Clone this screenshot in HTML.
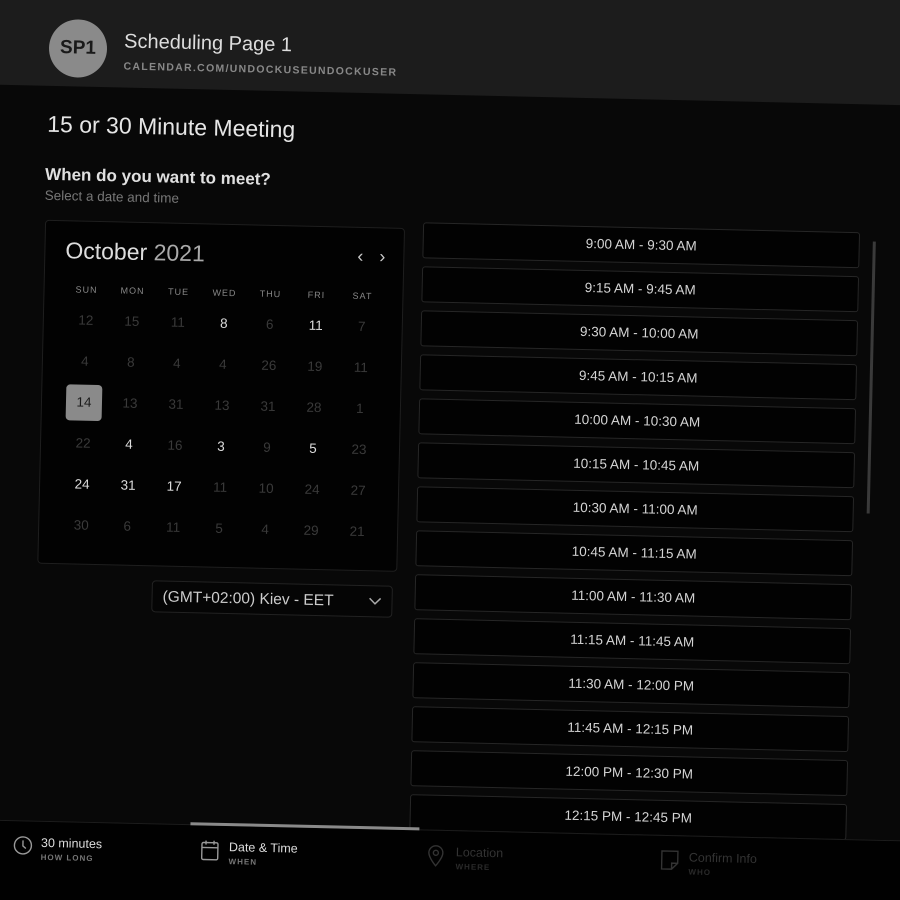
<!DOCTYPE html>
<html><head><meta charset="utf-8"><style>
html,body{margin:0;padding:0;width:900px;height:900px;overflow:hidden;background:#080808;}
#clip{position:relative;width:900px;height:900px;overflow:hidden;}
#w{position:absolute;left:-60px;top:-60px;width:1020px;height:1020px;transform-origin:510px 510px;transform:rotate(1.3deg);background:#080808;font-family:"Liberation Sans",sans-serif;color:#ddd;}
#p{position:absolute;left:60px;top:60px;width:900px;height:900px;}
.hdr{position:absolute;left:-60px;top:-60px;width:1020px;height:155px;background:#1c1c1c;}
.av{position:absolute;left:40px;top:28px;width:58px;height:58px;border-radius:50%;background:#8a8a8a;color:#1a1a1a;font-size:19px;font-weight:bold;text-align:center;line-height:58px;}
.t1{position:absolute;left:115px;top:38px;font-size:20px;color:#ddd;}
.t2{position:absolute;left:115px;top:68px;font-size:10.5px;letter-spacing:1.3px;font-weight:bold;color:#888;}
.h1{position:absolute;left:40px;top:120px;font-size:23px;color:#e6e6e6;}
.h2{position:absolute;left:39px;top:174px;font-size:17px;font-weight:bold;color:#e0e0e0;}
.h3{position:absolute;left:39px;top:197px;font-size:13.5px;color:#777;}
.cal{position:absolute;left:40px;top:229px;width:358px;height:342px;border:1px solid #1e1e1e;border-radius:4px;background:#020202;}
.mon{position:absolute;left:20px;top:16px;font-size:23px;color:#ddd;}
.mon span{color:#aaa;}
.nav{position:absolute;top:18px;font-size:18px;color:#ccc;}
.dh{position:absolute;top:63px;width:40px;text-align:center;font-size:9px;letter-spacing:1px;color:#888;margin-left:-20px;}
.d{position:absolute;width:36px;height:36px;line-height:36px;text-align:center;font-size:13.5px;color:#3a3a3a;margin-left:-18px;}
.d.b{color:#ddd;}
.d.s{background:#8a8a8a;color:#1a1a1a;border-radius:4px;}
.tz{position:absolute;left:155px;top:587px;width:241px;height:32px;border:1px solid #222;border-radius:4px;background:#050505;font-size:15.5px;color:#ccc;line-height:32px;padding-left:10px;box-sizing:border-box;}
.tz svg{position:absolute;right:10px;top:11px;}
.slot{position:absolute;left:418px;width:437px;height:36px;border:1px solid #262626;border-radius:3px;background:#020202;box-sizing:border-box;text-align:center;line-height:34px;font-size:13.5px;color:#d4d4d4;}
.sb{position:absolute;left:868px;top:232px;width:3px;height:272px;background:#3a3a3a;}
.ft{position:absolute;left:-60px;top:830px;width:1020px;height:200px;background:#010101;border-top:1px solid #1c1c1c;}
.bar{position:absolute;left:199px;top:828px;width:229px;height:3px;background:#8a8a8a;}
.fi{position:absolute;top:845px;}
.fi .a{font-size:12.5px;color:#ddd;}
.fi .b{font-size:8px;letter-spacing:1px;font-weight:bold;color:#777;margin-top:3px;}
.fi.g .a{color:#333}.fi.g .b{color:#2a2a2a}
.fi svg{position:absolute;left:-28px;top:0;}
</style></head><body><div id="clip"><div id="w"><div id="p">
<div class="hdr"></div>
<div class="av">SP1</div>
<div class="t1">Scheduling Page 1</div>
<div class="t2">CALENDAR.COM/UNDOCKUSEUNDOCKUSER</div>
<div class="h1">15 or 30 Minute Meeting</div>
<div class="h2">When do you want to meet?</div>
<div class="h3">Select a date and time</div>
<div class="cal">
<div class="mon">October <span>2021</span></div>
<div class="nav" style="left:312px">&#8249;</div><div class="nav" style="left:334px">&#8250;</div>
<div class="dh" style="left:42px">SUN</div><div class="dh" style="left:88px">MON</div><div class="dh" style="left:134px">TUE</div><div class="dh" style="left:180px">WED</div><div class="dh" style="left:226px">THU</div><div class="dh" style="left:272px">FRI</div><div class="dh" style="left:318px">SAT</div>
<div class="d" style="left:42px;top:81px">12</div><div class="d" style="left:88px;top:81px">15</div><div class="d" style="left:134px;top:81px">11</div><div class="d b" style="left:180px;top:81px">8</div><div class="d" style="left:226px;top:81px">6</div><div class="d b" style="left:272px;top:81px">11</div><div class="d" style="left:318px;top:81px">7</div>
<div class="d" style="left:42px;top:122px">4</div><div class="d" style="left:88px;top:122px">8</div><div class="d" style="left:134px;top:122px">4</div><div class="d" style="left:180px;top:122px">4</div><div class="d" style="left:226px;top:122px">26</div><div class="d" style="left:272px;top:122px">19</div><div class="d" style="left:318px;top:122px">11</div>
<div class="d s" style="left:42px;top:163px">14</div><div class="d" style="left:88px;top:163px">13</div><div class="d" style="left:134px;top:163px">31</div><div class="d" style="left:180px;top:163px">13</div><div class="d" style="left:226px;top:163px">31</div><div class="d" style="left:272px;top:163px">28</div><div class="d" style="left:318px;top:163px">1</div>
<div class="d" style="left:42px;top:204px">22</div><div class="d b" style="left:88px;top:204px">4</div><div class="d" style="left:134px;top:204px">16</div><div class="d b" style="left:180px;top:204px">3</div><div class="d" style="left:226px;top:204px">9</div><div class="d b" style="left:272px;top:204px">5</div><div class="d" style="left:318px;top:204px">23</div>
<div class="d b" style="left:42px;top:245px">24</div><div class="d b" style="left:88px;top:245px">31</div><div class="d b" style="left:134px;top:245px">17</div><div class="d" style="left:180px;top:245px">11</div><div class="d" style="left:226px;top:245px">10</div><div class="d" style="left:272px;top:245px">24</div><div class="d" style="left:318px;top:245px">27</div>
<div class="d" style="left:42px;top:286px">30</div><div class="d" style="left:88px;top:286px">6</div><div class="d" style="left:134px;top:286px">11</div><div class="d" style="left:180px;top:286px">5</div><div class="d" style="left:226px;top:286px">4</div><div class="d" style="left:272px;top:286px">29</div><div class="d" style="left:318px;top:286px">21</div>
</div>
<div class="tz">(GMT+02:00) Kiev - EET<svg width="13" height="8" viewBox="0 0 13 8"><path d="M1 1l5.5 5.5L12 1" stroke="#aaa" stroke-width="1.5" fill="none"/></svg></div>
<div class="slot" style="top:223px">9:00 AM - 9:30 AM</div>
<div class="slot" style="top:267px">9:15 AM - 9:45 AM</div>
<div class="slot" style="top:311px">9:30 AM - 10:00 AM</div>
<div class="slot" style="top:355px">9:45 AM - 10:15 AM</div>
<div class="slot" style="top:399px">10:00 AM - 10:30 AM</div>
<div class="slot" style="top:443px">10:15 AM - 10:45 AM</div>
<div class="slot" style="top:487px">10:30 AM - 11:00 AM</div>
<div class="slot" style="top:531px">10:45 AM - 11:15 AM</div>
<div class="slot" style="top:575px">11:00 AM - 11:30 AM</div>
<div class="slot" style="top:619px">11:15 AM - 11:45 AM</div>
<div class="slot" style="top:663px">11:30 AM - 12:00 PM</div>
<div class="slot" style="top:707px">11:45 AM - 12:15 PM</div>
<div class="slot" style="top:751px">12:00 PM - 12:30 PM</div>
<div class="slot" style="top:795px">12:15 PM - 12:45 PM</div>
<div class="sb"></div>
<div class="ft"></div>
<div class="bar"></div>
<div class="fi" style="left:50px"><svg width="20" height="20" viewBox="0 0 20 20"><circle cx="10" cy="10" r="8.5" stroke="#999" stroke-width="1.4" fill="none"/><path d="M10 5v5.5l3 2.5" stroke="#999" stroke-width="1.4" fill="none"/></svg><div class="a">30 minutes</div><div class="b">HOW LONG</div></div>
<div class="fi" style="left:238px"><svg width="18" height="22" viewBox="0 0 18 22"><rect x="1" y="3" width="16" height="17" rx="1.5" stroke="#999" stroke-width="1.4" fill="none"/><path d="M1 8h16M5 1v4M13 1v4" stroke="#999" stroke-width="1.4"/></svg><div class="a">Date &amp; Time</div><div class="b">WHEN</div></div>
<div class="fi g" style="left:465px"><svg width="16" height="22" viewBox="0 0 16 22"><path d="M8 21s-7-8-7-13a7 7 0 0114 0c0 5-7 13-7 13z" stroke="#333" stroke-width="1.4" fill="none"/><circle cx="8" cy="8" r="2.5" stroke="#333" stroke-width="1.4" fill="none"/></svg><div class="a">Location</div><div class="b">WHERE</div></div>
<div class="fi g" style="left:698px"><svg width="18" height="20" viewBox="0 0 18 20"><path d="M1 1h16v12l-6 6H1z M11 19v-6h6" stroke="#333" stroke-width="1.4" fill="none"/></svg><div class="a">Confirm Info</div><div class="b">WHO</div></div>
</div></div></div></body></html>
